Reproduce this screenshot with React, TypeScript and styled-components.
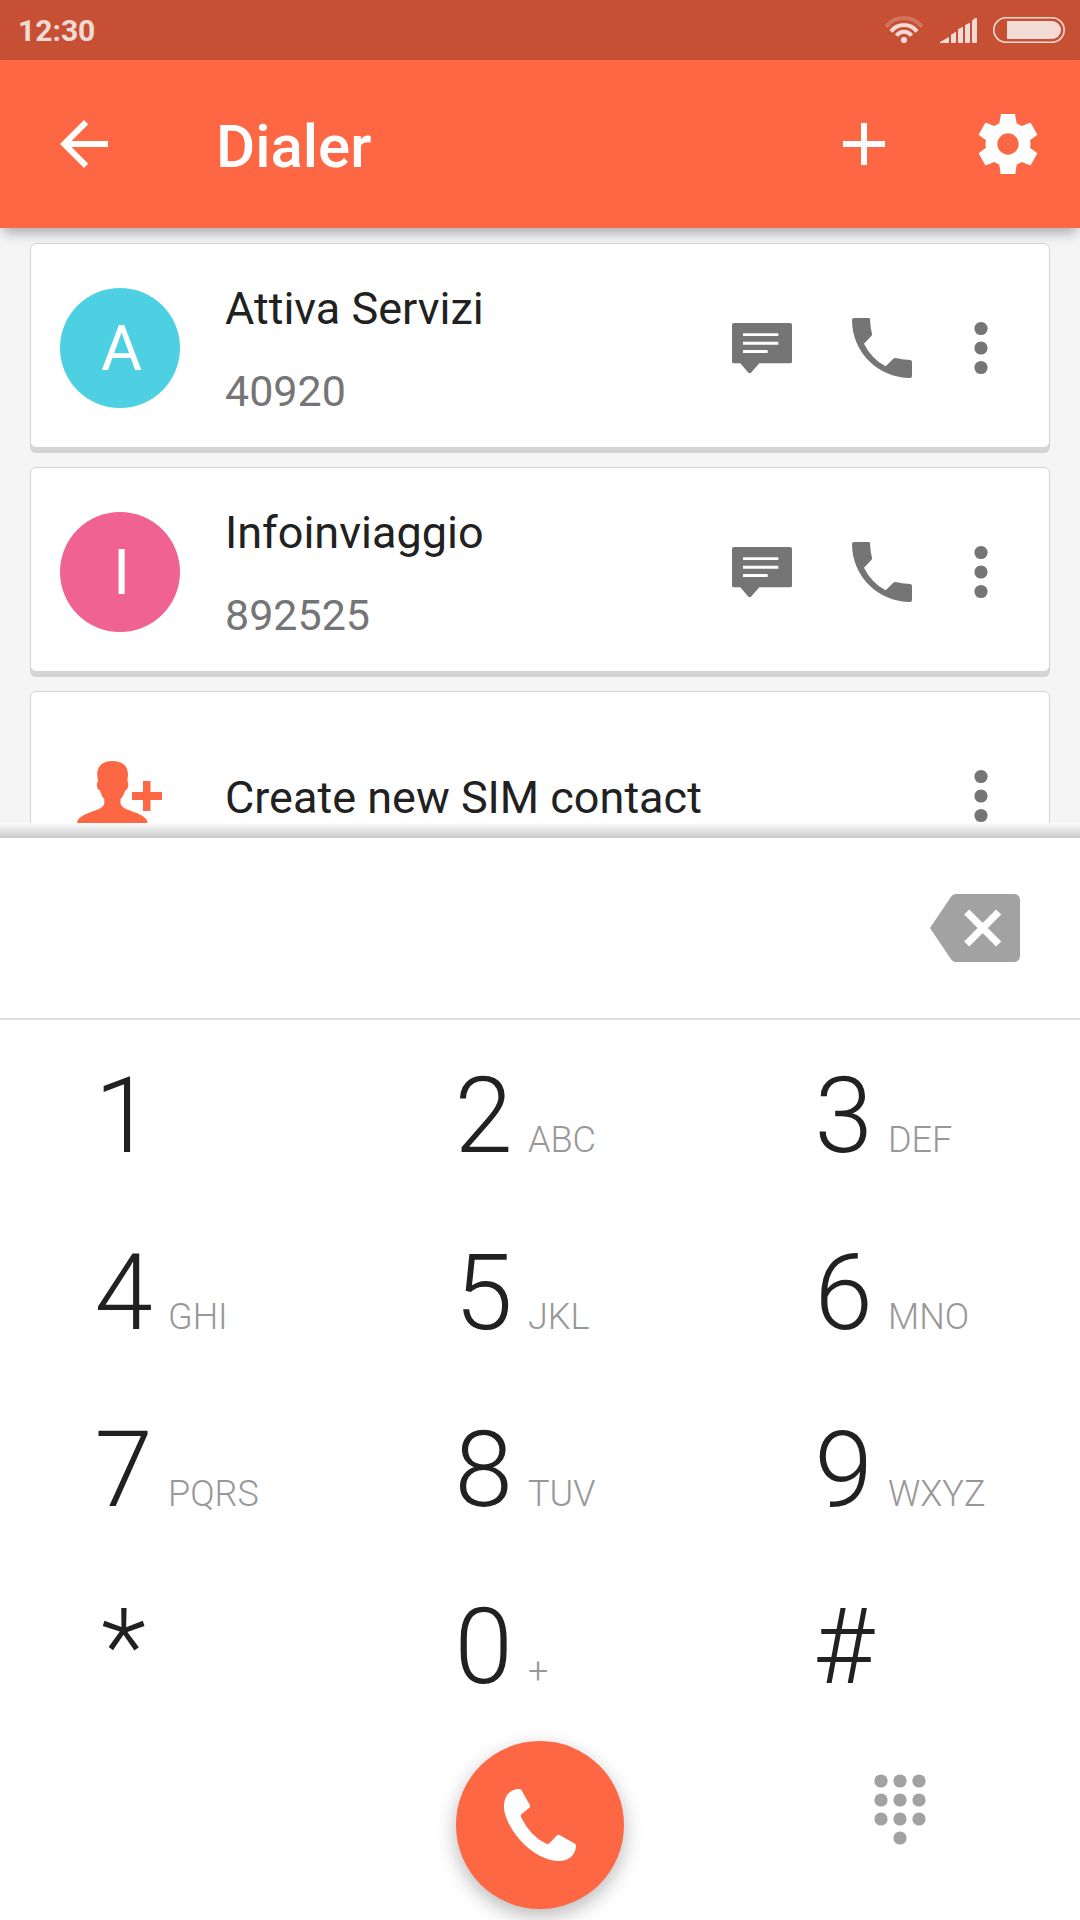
import React, { useState } from "react";
import styled, { createGlobalStyle } from "styled-components";

const color = {
  accent: "#fd6743",
  accentDark: "#c75034",
  status: "#f2dbd5",
  page: "#f5f5f5",
  edge: "#d3d3d3",
  text: "#212121",
  muted: "#757575",
  faint: "#989898",
  disabled: "#a2a2a2",
};

const GlobalStyle = createGlobalStyle`
  *, *::before, *::after { box-sizing: border-box; }
  body {
    margin: 0;
    background: ${color.page};
    font-family: Roboto, "Liberation Sans", sans-serif;
    color: ${color.text};
  }
  svg { display: block; }
`;

const Screen = styled.div`
  display: flex;
  flex-direction: column;
  height: 100vh;
  overflow: hidden;
`;

const StatusBar = styled.div`
  flex: none;
  display: flex;
  align-items: center;
  justify-content: space-between;
  height: 60px;
  padding: 0 15px 0 18px;
  background: ${color.accentDark};
  color: ${color.status};
  font-size: 30px;
  font-weight: 700;
`;

const StatusIcons = styled.div`
  display: flex;
  align-items: center;
  gap: 16px;
`;

const AppBar = styled.header`
  position: relative;
  z-index: 1;
  flex: none;
  display: flex;
  align-items: center;
  height: 168px;
  padding: 0 36px 0 48px;
  background: ${color.accent};
  color: #fff;
  box-shadow: 0 8px 12px -3px rgba(0, 0, 0, 0.3);
`;

const Title = styled.h1`
  flex: 1;
  margin: 0;
  padding: 6px 0 0 96px;
  font-size: 60px;
  line-height: 72px;
  font-weight: 500;
`;

const BarActions = styled.div`
  display: flex;
  gap: 72px;
`;

const IconButton = styled.button<{ $width: number }>`
  display: flex;
  align-items: center;
  justify-content: center;
  width: ${(p) => p.$width}px;
  min-height: 72px;
  padding: 0;
  border: 0;
  background: none;
  color: inherit;
  cursor: pointer;
`;

const ContactList = styled.ul`
  flex: 1;
  min-height: 0;
  overflow: hidden;
  display: flex;
  flex-direction: column;
  gap: 19px;
  margin: 0;
  padding: 15px 30px 0;
  list-style: none;
`;

const Card = styled.li`
  flex: none;
  display: flex;
  align-items: center;
  height: 205px;
  padding: 5px 59px 0 29px;
  background: #fff;
  border: 1px solid ${color.edge};
  border-radius: 6px;
  box-shadow: 0 5px 0 ${color.edge};
`;

const Avatar = styled.div<{ $fill?: string }>`
  flex: none;
  display: flex;
  align-items: center;
  justify-content: center;
  width: 120px;
  height: 120px;
  padding-left: ${(p) => (p.$fill ? 3 : 0)}px;
  border-radius: 50%;
  background: ${(p) => p.$fill ?? "none"};
  color: #fff;
  font-size: 63px;
`;

const ContactText = styled.div`
  flex: 1;
  min-width: 0;
  display: flex;
  flex-direction: column;
  gap: 22px;
  padding: 4px 0 0 45px;
  line-height: 60px;
`;

const Name = styled.span`
  font-size: 45px;
`;

const PhoneNumber = styled.span`
  font-size: 43px;
  color: ${color.muted};
`;

const CardActions = styled.div`
  display: flex;
  gap: 60px;
  color: ${color.muted};
`;

const Panel = styled.section`
  flex: none;
  background: #fff;
`;

const PanelShade = styled.div`
  height: 15px;
  background: linear-gradient(#fdfdfd, #c9c9c9);
`;

const NumberRow = styled.div`
  display: flex;
  align-items: center;
  height: 182px;
  padding: 0 60px;
  border-bottom: 2px solid #dedede;
  color: ${color.disabled};
`;

const NumberInput = styled.input`
  flex: 1;
  min-width: 0;
  border: 0;
  outline: 0;
  background: none;
  color: ${color.text};
  font: 300 72px Roboto, "Liberation Sans", sans-serif;
`;

const Keypad = styled.div`
  display: grid;
  grid-template-columns: repeat(3, 1fr);
  grid-auto-rows: 177px;
  padding: 8px 0 5px;
`;

const Key = styled.button`
  display: flex;
  align-items: baseline;
  gap: 15px;
  padding: 0 0 0 94px;
  border: 0;
  background: none;
  color: ${color.text};
  font-family: inherit;
  font-weight: 300;
  line-height: 177px;
  cursor: pointer;
`;

const Digit = styled.span`
  display: flex;
  justify-content: center;
  width: 59px;
  font-size: 105px;
`;

const Letters = styled.span`
  font-size: 36px;
  color: ${color.faint};
`;

const Footer = styled.div`
  display: grid;
  grid-template-columns: repeat(3, 1fr);
  justify-items: center;
  align-items: start;
  padding-bottom: 11px;
  color: ${color.disabled};
`;

const CallButton = styled.button`
  grid-column: 2;
  display: flex;
  align-items: center;
  justify-content: center;
  width: 168px;
  height: 168px;
  padding: 0;
  border: 0;
  border-radius: 50%;
  background: ${color.accent};
  color: #fff;
  box-shadow: 0 7px 20px rgba(0, 0, 0, 0.28);
  cursor: pointer;
`;

const PadToggle = styled(IconButton)`
  margin-top: 33px;
`;

const WifiIcon = () => (
  <svg width="40" height="28" viewBox="884 16 40 28" fill="none" stroke="currentColor" strokeWidth="4" aria-hidden="true">
    <path d="M886 26.8A23 23 0 0 1 922 26.8" opacity="0.25" />
    <path d="M891 31.4A16.5 16.5 0 0 1 917 31.4" />
    <path d="M896.5 35.6A9.4 9.4 0 0 1 911.5 35.6" />
    <circle cx="904" cy="40" r="3.1" fill="currentColor" stroke="none" />
  </svg>
);

const SignalIcon = () => (
  <svg width="37" height="25" viewBox="483 54 111 75" fill="currentColor" aria-hidden="true">
    <path d="M483 129V126L510 111V126Q510 129 507 129ZM516 104L531 95V126Q531 129 528 129H519Q516 129 516 126ZM537 88L552 80V126Q552 129 549 129H540Q537 129 537 126ZM558 75L573 68V126Q573 129 570 129H561Q558 129 558 126ZM579 62L588 54H591Q594 54 594 57V126Q594 129 591 129H582Q579 129 579 126Z" />
  </svg>
);

const BatteryIcon = () => (
  <svg width="72" height="26" viewBox="0 0 72 26" fill="none" aria-hidden="true">
    <rect x="0.8" y="0.8" width="70.4" height="24.4" rx="12.2" stroke="currentColor" strokeWidth="1.6" />
    <path d="M14 4H59A9 9 0 0 1 59 22H14Z" fill="currentColor" />
  </svg>
);

const BackIcon = () => (
  <svg width="72" height="72" viewBox="0 0 24 24" fill="currentColor" aria-hidden="true">
    <path d="M20 11H7.83l5.59-5.59L12 4l-8 8 8 8 1.41-1.41L7.83 13H20v-2z" />
  </svg>
);

const PlusIcon = () => (
  <svg width="72" height="72" viewBox="0 0 24 24" fill="currentColor" aria-hidden="true">
    <path d="M19 13h-6v6h-2v-6H5v-2h6V5h2v6h6z" />
  </svg>
);

const GearIcon = () => (
  <svg width="60" height="60" viewBox="594 342 180 180" fill="currentColor" aria-hidden="true">
    <path
      fillRule="evenodd"
      d="M663 342H705L710 370L725 378L750 368Q752 368 753 370L772 404L750 421L752 432L750 443L772 460L753 494Q752 496 750 496L725 486L710 494L706 522H662L658 494L643 486L618 496Q616 496 615 494L596 460L618 443L616 432L618 421L596 404L615 370Q616 368 618 368L643 378L658 370ZM684 400A32 32 0 1 0 684 464A32 32 0 1 0 684 400Z"
    />
  </svg>
);

const MessageIcon = () => (
  <svg width="60" height="50" viewBox="96 294 180 150" fill="currentColor" aria-hidden="true">
    <path
      fillRule="evenodd"
      d="M101 294H271Q276 294 276 299V410Q276 415 271 415H178L153 443Q149 446 145 443L121 415H101Q96 415 96 410V299Q96 294 101 294ZM129 325V333H235V325ZM129 350V359H235V350ZM129 375V384H203V375Z"
    />
  </svg>
);

const PhoneIcon = () => (
  <svg width="60" height="60" viewBox="456 279 180 180" fill="currentColor" aria-hidden="true">
    <path d="M462 279H506Q510 279 510 283Q511 308 516 326Q517 330 514 333L492 356Q514 401 557 424L580 401Q583 398 587 399Q605 404 630 405Q636 405 636 411V453Q636 459 630 459A174 174 0 0 1 456 285Q456 279 462 279Z" />
  </svg>
);

const MoreIcon = () => (
  <svg width="18" height="54" viewBox="0 0 18 54" fill="currentColor" aria-hidden="true">
    <circle cx="9" cy="7.5" r="6.6" />
    <circle cx="9" cy="27" r="6.6" />
    <circle cx="9" cy="46.5" r="6.6" />
  </svg>
);

const AddPersonIcon = () => (
  <svg width="86" height="72" viewBox="77 760 86 72" fill={color.accent} aria-hidden="true">
    <path d="M112.5 761C122 761 128 766 128 774.5L127.4 781.5Q128.6 782 128.2 786Q127.4 790 125.2 790.6Q123.5 796.5 120.5 799V803.5Q121.5 807 127 809.5C137 813.2 147.5 816 147.5 823V832H77V823C77.5 816 88 813.2 98 809.5Q103.5 807 104.3 803.5V799Q101.5 796.5 100 790.6Q97.5 790 97 786Q96.6 782 98 781.5L97.2 774.5C97.2 766 103 761 112.5 761Z" />
    <path d="M143 781H150.5V792H162V800H150.5V811H143V800H132V792H143Z" />
  </svg>
);

const BackspaceIcon = () => (
  <svg width="90" height="68" viewBox="210 462 270 204" aria-hidden="true">
    <path d="M210 564L272 472Q279 462 289 462H460Q480 462 480 482V646Q480 666 460 666H289Q279 666 272 656Z" fill="currentColor" />
    <path d="M320 516L416 612M416 516L320 612" stroke="#fff" strokeWidth="22" />
  </svg>
);

const HandsetIcon = () => (
  <svg width="72" height="72" viewBox="222 237 216 216" fill="currentColor" aria-hidden="true">
    <path d="M268 237Q272 236 274 240L300 286Q301 290 298 293L275 312Q271 316 274 323Q300 376 346 400Q353 404 358 400L381 376Q385 373 390 376L435 401Q438 403 438 407C438 433 416 453 388 453C350 453 308 432 270 390C240 356 222 316 222 290C222 257 240 237 268 237Z" />
  </svg>
);

const DialpadIcon = () => (
  <svg width="54" height="72" viewBox="0 0 54 72" fill="currentColor" aria-hidden="true">
    {[8, 27, 46].flatMap((x) => [7, 26, 45].map((y) => <circle key={`${x}-${y}`} cx={x} cy={y} r="6.6" />))}
    <circle cx="27" cy="64" r="6.6" />
  </svg>
);

const contacts = [
  { name: "Attiva Servizi", number: "40920", fill: "#4dd0e1" },
  { name: "Infoinviaggio", number: "892525", fill: "#f06292" },
];

const keys: [string, string?][] = [
  ["1"], ["2", "ABC"], ["3", "DEF"],
  ["4", "GHI"], ["5", "JKL"], ["6", "MNO"],
  ["7", "PQRS"], ["8", "TUV"], ["9", "WXYZ"],
  ["*"], ["0", "+"], ["#"],
];

export default function App() {
  const [entry, setEntry] = useState("");

  return (
    <Screen>
      <GlobalStyle />
      <StatusBar>
        <time>12:30</time>
        <StatusIcons>
          <WifiIcon />
          <SignalIcon />
          <BatteryIcon />
        </StatusIcons>
      </StatusBar>

      <AppBar>
        <IconButton $width={72} aria-label="Back"><BackIcon /></IconButton>
        <Title>Dialer</Title>
        <BarActions>
          <IconButton $width={72} aria-label="Add"><PlusIcon /></IconButton>
          <IconButton $width={72} aria-label="Settings"><GearIcon /></IconButton>
        </BarActions>
      </AppBar>

      <ContactList>
        {contacts.map((c) => (
          <Card key={c.number}>
            <Avatar $fill={c.fill}>{c.name[0]}</Avatar>
            <ContactText>
              <Name>{c.name}</Name>
              <PhoneNumber>{c.number}</PhoneNumber>
            </ContactText>
            <CardActions>
              <IconButton $width={60} aria-label={`Message ${c.name}`}><MessageIcon /></IconButton>
              <IconButton $width={60} aria-label={`Call ${c.name}`}><PhoneIcon /></IconButton>
              <IconButton $width={18} aria-label="More"><MoreIcon /></IconButton>
            </CardActions>
          </Card>
        ))}
        <Card>
          <Avatar><AddPersonIcon /></Avatar>
          <ContactText><Name>Create new SIM contact</Name></ContactText>
          <CardActions>
            <IconButton $width={18} aria-label="More"><MoreIcon /></IconButton>
          </CardActions>
        </Card>
      </ContactList>

      <Panel>
        <PanelShade />
        <NumberRow>
          <NumberInput type="tel" aria-label="Phone number" value={entry} onChange={(e) => setEntry(e.target.value)} />
          <IconButton $width={90} aria-label="Delete" onClick={() => setEntry(entry.slice(0, -1))}>
            <BackspaceIcon />
          </IconButton>
        </NumberRow>
        <Keypad>
          {keys.map(([digit, letters]) => (
            <Key key={digit} onClick={() => setEntry(entry + digit)}>
              <Digit>{digit}</Digit>
              {letters && <Letters>{letters}</Letters>}
            </Key>
          ))}
        </Keypad>
        <Footer>
          <CallButton aria-label="Call"><HandsetIcon /></CallButton>
          <PadToggle $width={72} aria-label="Toggle dial pad"><DialpadIcon /></PadToggle>
        </Footer>
      </Panel>
    </Screen>
  );
}
